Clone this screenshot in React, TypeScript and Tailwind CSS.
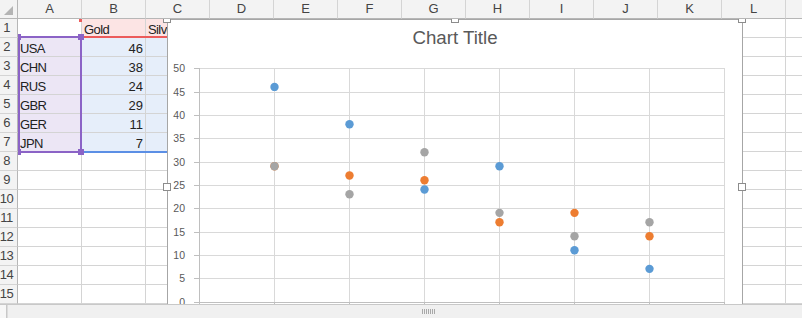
import React from "react";

const columns = ["A", "B", "C", "D", "E", "F", "G", "H", "I", "J", "K", "L", "M"];

const table: (string | number)[][] = [
  ["", "Gold", "Silver", "Bronze"],
  ["USA", 46, 29, 29],
  ["CHN", 38, 27, 23],
  ["RUS", 24, 26, 32],
  ["GBR", 29, 17, 19],
  ["GER", 11, 19, 14],
  ["JPN", 7, 14, 17],
];

const series = [
  { name: "Gold", color: "#5b9bd5", values: [46, 38, 24, 29, 11, 7] },
  { name: "Silver", color: "#ed7d31", values: [29, 27, 26, 17, 19, 14] },
  { name: "Bronze", color: "#a5a5a5", values: [29, 23, 32, 19, 14, 17] },
];

const X0 = 31;
const DX = 75;
const Y0 = 281.5;
const K = 4.665;
const yv = (v: number) => Y0 - v * K;
const ticks = [0, 5, 10, 15, 20, 25, 30, 35, 40, 45, 50];

function cellBg(r: number, c: number) {
  if (r === 0 && c >= 1 && c <= 3) return "bg-[#fce4e4]";
  if (r >= 1 && r <= 6 && c === 0) return "bg-[#ece6f5]";
  if (r >= 1 && r <= 6 && c >= 1 && c <= 3) return "bg-[#e6eefa]";
  return "bg-white";
}

function Cell({ r, c }: { r: number; c: number }) {
  const value = r < table.length && c < 4 ? table[r][c] : "";
  const isNum = typeof value === "number";
  return (
    <div
      className={`h-[19px] border-r border-b border-[#d4d4d4] flex items-end pb-[1px] px-[2px] text-[13px] leading-none text-[#222] whitespace-nowrap overflow-visible ${cellBg(r, c)} ${isNum ? "justify-end" : "justify-start tracking-[-0.6px]"}`}
    >
      {value}
    </div>
  );
}

function Handle({ className }: { className: string }) {
  return <div className={`absolute h-2 w-2 border border-[#8c8c8c] bg-white ${className}`} />;
}

function Chart() {
  return (
    <div className="absolute left-[167px] top-0 h-[300px] w-[576px] border border-[#a6a6a6] bg-white">
      <svg width={574} height={298} className="absolute left-0 top-0" fontFamily="'Liberation Sans', Arial, sans-serif">
        <text x={287} y={24} textAnchor="middle" fontSize={18.7} fill="#595959">
          Chart Title
        </text>
        {ticks.map((t) => {
          const y = Math.round(yv(t)) + 0.5;
          return (
            <g key={t}>
              <line x1={X0} x2={X0 + DX * 7 + 1} y1={y} y2={y} stroke={t === 0 ? "#bfbfbf" : "#d9d9d9"} />
              <line x1={X0 - 5} x2={X0} y1={y} y2={y} stroke="#bfbfbf" />
              <text x={17} y={y + 3.8} textAnchor="end" fontSize={10.5} fill="#595959">
                {t}
              </text>
            </g>
          );
        })}
        {[1, 2, 3, 4, 5, 6, 7].map((i) => (
          <line
            key={i}
            x1={X0 + DX * i + 0.5}
            x2={X0 + DX * i + 0.5}
            y1={Math.round(yv(50))}
            y2={Math.round(yv(0))}
            stroke="#d9d9d9"
          />
        ))}
        <line x1={X0 + 0.5} x2={X0 + 0.5} y1={Math.round(yv(50))} y2={Math.round(yv(0)) + 1} stroke="#bfbfbf" />
        {[0, 1, 2, 3, 4, 5, 6, 7].map((i) => (
          <line
            key={i}
            x1={X0 + DX * i + 0.5}
            x2={X0 + DX * i + 0.5}
            y1={Math.round(yv(0))}
            y2={Math.round(yv(0)) + 5}
            stroke="#bfbfbf"
          />
        ))}
        {series.map((s) =>
          s.values.map((v, i) => (
            <circle key={`${s.name}-${i}`} cx={X0 + DX * (i + 1) + 0.5} cy={yv(v)} r={4.2} fill={s.color} />
          ))
        )}
      </svg>
    </div>
  );
}

export default function App() {
  return (
    <div className="relative h-[318px] w-[802px] overflow-hidden bg-white font-['Liberation_Sans',Arial,sans-serif]">
      {/* column headers */}
      <div className="relative z-10 grid h-[19px] grid-cols-[18px_repeat(13,64px)] bg-[#f3f3f3]">
        <div className="flex h-[19px] items-end justify-end border-r border-b border-[#b6b6b6] pr-[4px] pb-[3px]">
          <svg width="9" height="9">
            <polygon points="9,0 9,9 0,9" fill="#b4b4b4" />
          </svg>
        </div>
        {columns.map((c) => (
          <div
            key={c}
            className="flex h-[19px] items-center justify-center border-r border-b border-r-[#d4d4d4] border-b-[#b6b6b6] text-[13px] text-[#444]"
          >
            {c}
          </div>
        ))}
      </div>

      {/* sheet body */}
      <div className="relative h-[285px] overflow-hidden">
        <div className="grid grid-cols-[18px_repeat(13,64px)]">
          {Array.from({ length: 15 }).map((_, r) => (
            <React.Fragment key={r}>
              <div className="flex h-[19px] items-center justify-center border-r border-b border-r-[#b6b6b6] border-b-[#d4d4d4] bg-[#f3f3f3] pr-[4px] text-[13px] tracking-[-0.5px] text-[#444]">
                {r + 1}
              </div>
              {columns.map((_, c) => (
                <Cell key={c} r={r} c={c} />
              ))}
            </React.Fragment>
          ))}
        </div>

        {/* range highlights */}
        <div className="absolute left-[79px] top-0 h-[3px] w-[3px] bg-[#ec5b5b]" />
        <div className="absolute left-[81px] top-[17px] h-[2px] w-[86px] bg-[#ec5b5b]" />
        <div className="absolute left-[18px] top-[17px] h-[117px] w-[64px] border-2 border-[#8b63c6]" />
        <div className="absolute left-[82px] top-[132px] h-[2px] w-[85px] bg-[#5b8fe5]" />
        <div className="absolute left-[78px] top-[15px] h-[6px] w-[6px] bg-[#8b63c6]" />
        <div className="absolute left-[78px] top-[130px] h-[6px] w-[6px] bg-[#8b63c6]" />
        <div className="absolute left-[18px] top-[15px] h-[6px] w-[3px] bg-[#8b63c6]" />
        <div className="absolute left-[18px] top-[130px] h-[6px] w-[3px] bg-[#8b63c6]" />

        <Chart />

        <Handle className="left-[163px] top-[-4px]" />
        <Handle className="left-[451px] top-[-4px]" />
        <Handle className="left-[738px] top-[-4px]" />
        <Handle className="left-[163px] top-[164px]" />
        <Handle className="left-[738px] top-[164px]" />
      </div>

      {/* horizontal scroll strip */}
      <div className="flex h-[14px] border-t border-[#c8c8c8] bg-[#f0f0f0]">
        <div className="w-[7px] border-r border-[#c8c8c8] bg-[#f7f7f7]" />
        <div className="flex flex-1 items-center border-l border-[#dcdcdc] pl-[414px]">
          <div className="flex h-[5px] gap-[1px]">
            {[0, 1, 2, 3, 4, 5, 6].map((i) => (
              <div key={i} className="h-[5px] w-[1px] bg-[#a8a8a8]" />
            ))}
          </div>
        </div>
      </div>
    </div>
  );
}
